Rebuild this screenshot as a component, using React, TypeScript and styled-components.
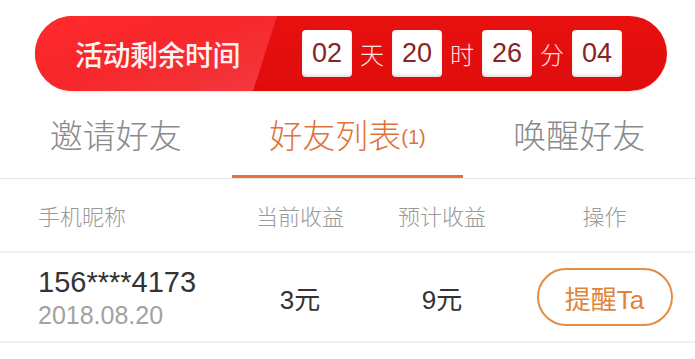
import React from "react";
import styled, { createGlobalStyle } from "styled-components";

const Global = createGlobalStyle`
  html, body { margin: 0; padding: 0; background: #ffffff; }
  body { font-family: "Liberation Sans", "Noto Sans CJK SC", sans-serif; }
  * { box-sizing: border-box; }
`;

const Page = styled.div`
  width: 695px;
  height: 359px;
  overflow: hidden;
  background: #ffffff;
  display: flex;
  flex-direction: column;
  padding-top: 16px;
`;

const Banner = styled.div`
  margin: 0 28px 0 35px;
  height: 75px;
  border-radius: 38px;
  overflow: hidden;
  background: linear-gradient(180deg, #e8110f 0%, #de0d0c 100%);
  display: flex;
  align-items: center;
  box-shadow: 0 1px 2px rgba(180, 0, 0, 0.15);
`;

const Label = styled.div`
  width: 242px;
  height: 100%;
  padding-left: 40px;
  display: flex;
  align-items: center;
  background: linear-gradient(160deg, #ff2a2c 0%, #f7262a 45%, #f23a3e 100%);
  clip-path: polygon(0 0, 100% 0, calc(100% - 24px) 100%, 0 100%);
  color: #fff3f3;
  font-size: 28px;
  letter-spacing: -0.5px;
  font-weight: 500;
`;

const Timer = styled.div`
  margin-left: 25px;
  display: flex;
  align-items: center;
  gap: 8px;
`;

const Digit = styled.div`
  width: 50px;
  height: 47px;
  border-radius: 4px;
  background: #ffffff;
  box-shadow: inset 0 -2px 3px rgba(0, 0, 0, 0.12);
  display: flex;
  align-items: center;
  justify-content: center;
  color: #8a2424;
  font-size: 27px;
`;

const Unit = styled.span`
  width: 24px;
  color: #ffe4e4;
  font-size: 24px;
  font-weight: 300;
  text-align: center;
`;

const Tabs = styled.div`
  display: flex;
  height: 88px;
  border-bottom: 1px solid #e6e6e6;
`;

const Tab = styled.div<{ $active?: boolean }>`
  flex: 1;
  display: flex;
  align-items: center;
  justify-content: center;
  padding-top: 1px;
  border-bottom: 3px solid ${(p) => (p.$active ? "#e0733a" : "transparent")};
  color: ${(p) => (p.$active ? "#e0733a" : "#8a8a8a")};
  font-size: 33px;
  font-weight: 300;
`;

const Count = styled.span`
  font-size: 20px;
  margin-top: 8px;
`;

const Row = styled.div<{ $h: number }>`
  display: grid;
  grid-template-columns: 192px 140px 144px 1fr;
  align-items: center;
  height: ${(p) => p.$h}px;
  padding-left: 38px;
  border-bottom: 2px solid #f1f1f1;
`;

const HeadCell = styled.div<{ $center?: boolean }>`
  color: #999999;
  font-size: 22px;
  font-weight: 300;
  text-align: ${(p) => (p.$center ? "center" : "left")};
`;

const Phone = styled.div`
  display: flex;
  flex-direction: column;
  gap: 3px;
`;

const PhoneNum = styled.div`
  color: #333333;
  font-size: 29px;
  line-height: 32px;
`;

const DateText = styled.div`
  color: #a2a2a2;
  font-size: 25px;
  line-height: 28px;
`;

const Value = styled.div`
  color: #333333;
  font-size: 26px;
  text-align: center;
`;

const ActionCell = styled.div`
  display: flex;
  justify-content: center;
`;

const RemindButton = styled.button`
  width: 136px;
  height: 58px;
  border-radius: 29px;
  border: 2px solid #e38d45;
  background: #ffffff;
  color: #e0843a;
  font-family: "Liberation Sans", "Noto Sans CJK SC", sans-serif;
  font-size: 26px;
  padding: 0;
  display: flex;
  align-items: center;
  justify-content: center;
`;

export default function App() {
  const time = [
    ["02", "天"],
    ["20", "时"],
    ["26", "分"],
    ["04", ""],
  ];
  return (
    <>
      <Global />
      <Page>
        <Banner>
          <Label>活动剩余时间</Label>
          <Timer>
            {time.map(([d, u]) => (
              <React.Fragment key={d + u}>
                <Digit>{d}</Digit>
                {u && <Unit>{u}</Unit>}
              </React.Fragment>
            ))}
          </Timer>
        </Banner>
        <Tabs>
          <Tab>邀请好友</Tab>
          <Tab $active>
            好友列表<Count>(1)</Count>
          </Tab>
          <Tab>唤醒好友</Tab>
        </Tabs>
        <Row $h={74}>
          <HeadCell>手机昵称</HeadCell>
          <HeadCell $center>当前收益</HeadCell>
          <HeadCell $center>预计收益</HeadCell>
          <HeadCell $center>操作</HeadCell>
        </Row>
        <Row $h={90}>
          <Phone>
            <PhoneNum>156****4173</PhoneNum>
            <DateText>2018.08.20</DateText>
          </Phone>
          <Value>3元</Value>
          <Value>9元</Value>
          <ActionCell>
            <RemindButton>提醒Ta</RemindButton>
          </ActionCell>
        </Row>
      </Page>
    </>
  );
}
